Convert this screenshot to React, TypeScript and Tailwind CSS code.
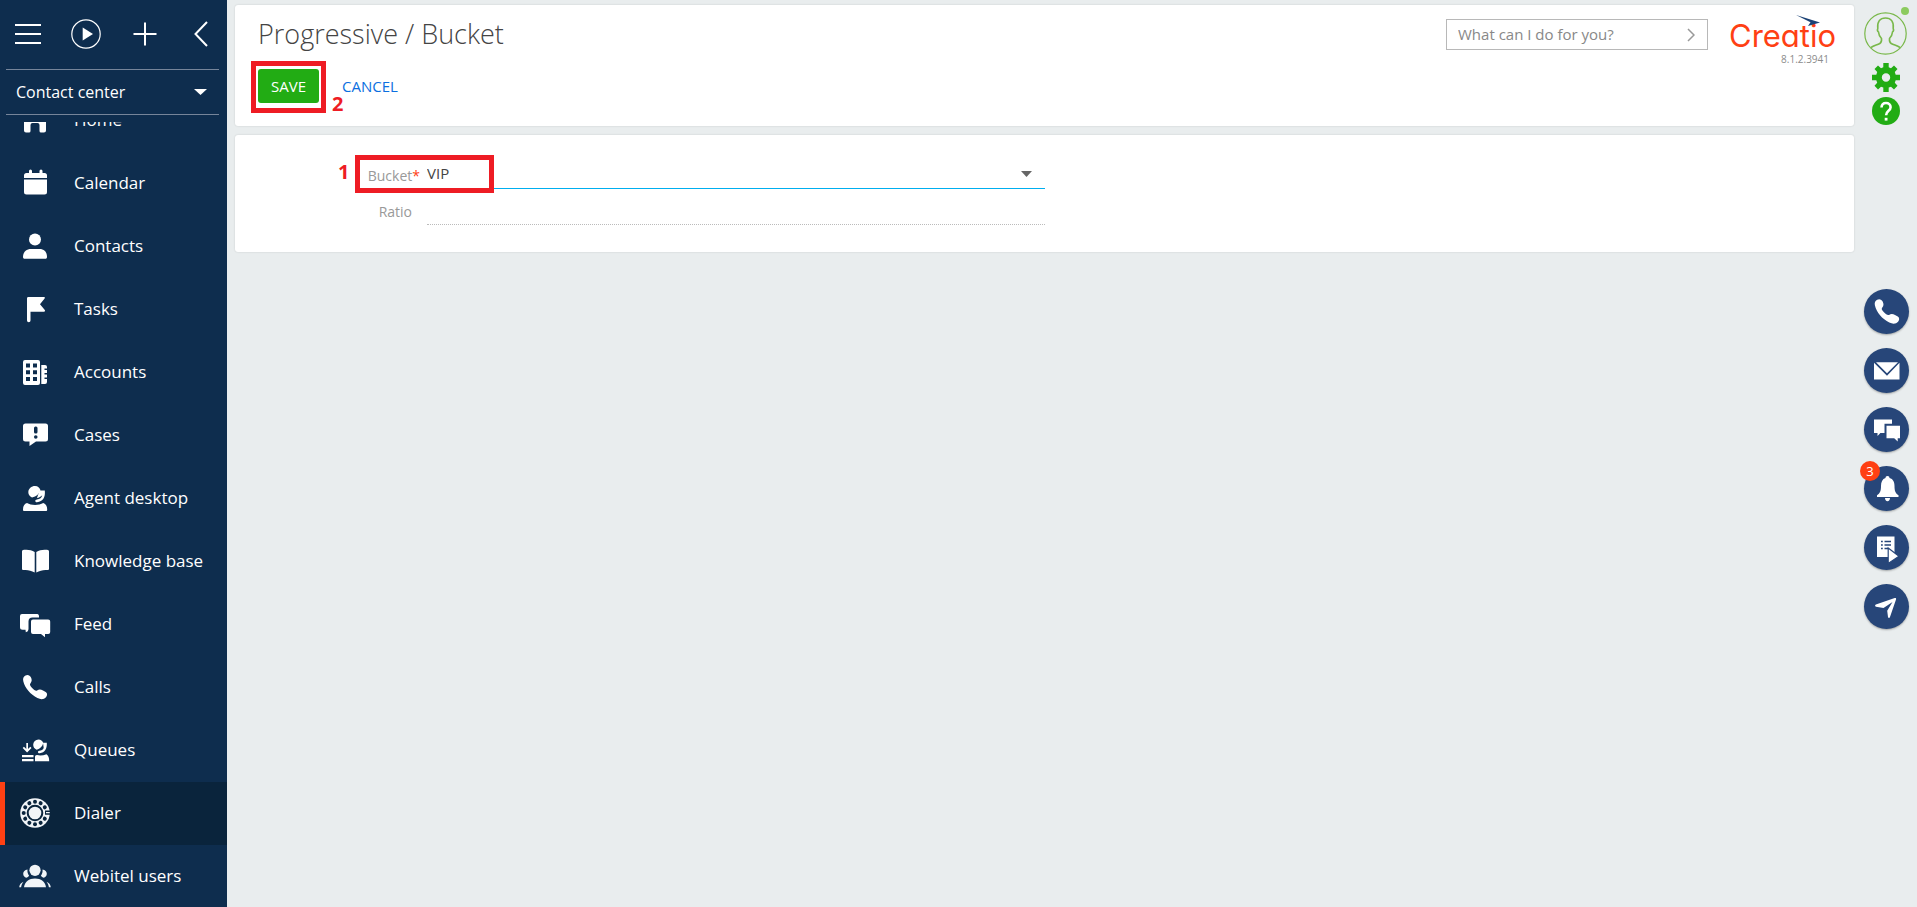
import type { ReactNode } from "react";

const NAVY = "#0e2d4e";

function Glyph({ children }: { children: ReactNode }) {
  return (
    <svg viewBox="0 0 35 35" className="size-[35px] shrink-0 fill-current" aria-hidden="true">
      {children}
    </svg>
  );
}

const HANDSET =
  "M8.5 5.6C10.6 4.4 13 5.3 14 7.6c1 2.3 1 4-.5 5.6-1 1.2-.6 2.2 1.4 4.5 2.2 2.5 4 3.4 5.2 2.8 1.900-1.200 3.600-1.200 5.900 0l2.700 1.500c1.800 1.200 1.800 3.400.3 5.200-2 2.200-5 2.600-8.600.8C13.500 24.600 7.800 18 6.300 11.300c-.6-2.700.1-4.600 2.200-5.700z";

const menu: { label: string; active?: boolean; icon: ReactNode }[] = [
  {
    label: "Home",
    icon: <path d="M18 4 7 13v14.500a2 2 0 0 0 2 2h3a1.500 1.500 0 0 0 1.500-1.500v-6a2 2 0 0 1 2-2h5a2 2 0 0 1 2 2v6a1.500 1.500 0 0 0 1.500 1.500h3a2 2 0 0 0 2-2V13z" />,
  },
  {
    label: "Calendar",
    icon: (
      <path d="M7 12V9.500A2.500 2.500 0 0 1 9.500 7H12V5a1.500 1.500 0 0 1 3 0v2h7.500V5a1.500 1.500 0 0 1 3 0v2h2A2.500 2.500 0 0 1 30 9.500V12zM7 13.500h23V26a2.500 2.500 0 0 1-2.500 2.500h-18A2.500 2.500 0 0 1 7 26z" />
    ),
  },
  {
    label: "Contacts",
    icon: (
      <>
        <circle cx="18" cy="10.500" r="6" />
        <path d="M6 28c0-5 3.500-8 8-8h8.500c4.500 0 7.500 3 7.500 8 0 1.200-.6 1.800-1.800 1.800H7.800C6.600 29.800 6 29.200 6 28z" />
      </>
    ),
  },
  {
    label: "Tasks",
    icon: <path d="M10 6.500C10 5.500 10.500 5 11.500 5h15.300c1 0 1.400.7.8 1.500L23 12.200l4.800 5.800c.6.9.2 1.700-.9 1.700H13.500v8.800a1.750 1.750 0 0 1-3.500 0z" />,
  },
  {
    label: "Accounts",
    icon: (
      <>
        <path fillRule="evenodd" d="M8 5h13a2 2 0 0 1 2 2v21a2 2 0 0 1-2 2H8a2 2 0 0 1-2-2V7a2 2 0 0 1 2-2zm1 3.500v4h4v-4zm7 0v4h4v-4zm-7 6.700v4h4v-4zm7 0v4h4v-4zM9 22v4h4v-4zm7 0v4h4v-4z" />
        <path d="M24.300 10h3.700a2 2 0 0 1 2 2v1.500h-2.500v1.500h2.500v3h-2.500v1.500h2.500v3h-2.500v1.500h2.500V27a2 2 0 0 1-2 2h-3.700z" />
      </>
    ),
  },
  {
    label: "Cases",
    icon: (
      <>
        <path d="M8.500 5.500h20A2.500 2.500 0 0 1 31 8v13a2.500 2.500 0 0 1-2.500 2.500H19L12.500 28v-4.500h-4A2.500 2.500 0 0 1 6 21V8a2.500 2.500 0 0 1 2.500-2.500z" />
        <rect x="17" y="8.500" width="3.500" height="7" rx="1.500" fill={NAVY} />
        <circle cx="18.750" cy="19" r="1.800" fill={NAVY} />
      </>
    ),
  },
  {
    label: "Agent desktop",
    icon: (
      <>
        <path d="M18 5c3 0 4.500 2 5.500 4.200C22 13 19.500 15.500 15 16.500c-2.400-1-3.700-3-3.700-5.400C11.300 7.700 14.500 5 18 5z" />
        <path d="M22.500 9.500h5.300C28.500 16.500 26 20.500 20 21.300c-1 0-1.700-.5-1.700-1.400s.7-1.300 1.700-1.400c3-.5 4.500-1.800 5.300-4.300-1.500 1.500-3.300 2.500-5.300 2.800z" />
        <path d="M10 22c4 2.600 12 2.600 16.300 0 2.700 1.400 3.900 3 3.900 6.500 0 1-.4 1.500-1.400 1.500H7.400c-1 0-1.400-.5-1.400-1.500C6 25 7.500 22.800 10 22z" />
      </>
    ),
  },
  {
    label: "Knowledge base",
    icon: <path d="M5 7.500C5 6.500 5.800 6 7 5.800c4-.5 7.500.2 10.700 2.200v20.500C14 26.300 10.500 25.600 6.500 26c-1 0-1.500-.4-1.500-1.300zM32 7.500c0-1-.8-1.500-2-1.700-4-.5-7.500.2-10.700 2.200v20.500c3.700-2.200 7.200-2.900 11.200-2.500 1 0 1.500-.4 1.500-1.300z" />,
  },
  {
    label: "Feed",
    icon: (
      <path d="M5 7h15.500A2 2 0 0 1 22 9v1.500h-6.500a4 4 0 0 0-4 4v7.300c0 2-1 3.200-2.700 3.400l-.3-2.400H5.500A2.500 2.500 0 0 1 3 20.300V9a2 2 0 0 1 2-2zM16 12.500h15.200a2 2 0 0 1 2 2V25a2 2 0 0 1-2 2H28v3.300L24 27h-8a2 2 0 0 1-2-2V14.500a2 2 0 0 1 2-2z" />
    ),
  },
  { label: "Calls", icon: <path d={HANDSET} /> },
  {
    label: "Queues",
    icon: (
      <>
        <path d="M9.300 10h1.700v6l2.300-2.300 1.200 1.300-4.400 4.400L5.700 15l1.200-1.300L9.300 16zM5 22h11.500v2.200H5zM5 26h11.500v2.200H5z" />
        <path d="M21.500 6.500c2.300 0 4 1.300 4.800 3.500-1 3.500-3 5.800-6.600 6.800-2.400-1-3.500-2.800-3.500-5a5.300 5.300 0 0 1 5.300-5.300z" />
        <path d="M26 9.800h3.800c.4 6-2 9.800-7 10.500-2.200.2-2.600-2.200-.4-2.500 2-.3 3.500-1.200 4.300-2.900z" />
        <path d="M18 24c0-1.200.7-2 2-2 3 .7 6 .5 9.500-.8 2 1.300 2.700 3.500 2.700 7H18z" />
      </>
    ),
  },
  {
    label: "Dialer",
    active: true,
    icon: (
      <>
        <circle cx="18" cy="17" r="14.800" fill="#f1f4f7" />
        <circle cx="18" cy="17" r="7.300" fill="none" stroke="#0a243c" strokeWidth="2" />
        {[30, 60, 90, 120, 150, 180, 210, 240, 270, 300, 330].map((deg) => (
          <circle key={deg} cx="29.300" cy="17" r="2" fill="#0a243c" transform={`rotate(${deg} 18 17)`} />
        ))}
        <path d="M28 14.500h5v1.500h-4v1.300h4v1.500h-5z" fill="#0a243c" />
      </>
    ),
  },
  {
    label: "Webitel users",
    icon: (
      <g fill="#f1f4f7">
        <circle cx="18" cy="11.300" r="5.600" />
        <path d="M7 28.300c.8-5.500 5-8.800 11-8.800s10.200 3.300 11 8.800z" />
        <path d="M10.500 10.500c-2.700.3-4.300 2-4.300 4.200 0 2 1.300 3.600 3.200 4 1.200-.5 2-1.100 2.700-2-1.400-1.800-1.900-3.700-1.600-6.200zM25.500 10.500c2.700.3 4.300 2 4.300 4.200 0 2-1.300 3.600-3.200 4-1.200-.5-2-1.100-2.700-2 1.400-1.800 1.900-3.700 1.600-6.200zM6.500 22.800C4 23.800 2.600 25.500 2.200 28.300h1.900c.3-2.200 1.100-4 2.400-5.500zM29.500 22.800c2.500 1 3.900 2.700 4.300 5.500h-1.900c-.3-2.200-1.100-4-2.400-5.500z" />
      </g>
    ),
  },
];

function Sidebar() {
  return (
    <aside className="flex w-[227px] shrink-0 flex-col overflow-hidden bg-[#0e2d4e] text-white">
      <div className="flex h-[69px] shrink-0 items-center gap-[30px] pr-[19px] pb-0.5 pl-[15px]">
        <button type="button" aria-label="Menu">
          <svg viewBox="0 0 26 26" className="size-[26px] stroke-current stroke-2">
            <path d="M0 4h26M0 13h26M0 22h26" />
          </svg>
        </button>
        <button type="button" aria-label="Run process">
          <svg viewBox="0 0 30 30" className="size-[30px] fill-current">
            <circle cx="15" cy="15" r="14.200" fill="none" stroke="currentColor" strokeWidth="1.200" />
            <path d="M11.700 8.500v13L22 15z" />
          </svg>
        </button>
        <button type="button" aria-label="Add">
          <svg viewBox="0 0 28 28" className="size-7 stroke-current stroke-2">
            <path d="M2.500 14h23M14 2.500v23" />
          </svg>
        </button>
        <button type="button" aria-label="Collapse" className="ml-auto">
          <svg viewBox="0 0 14 26" className="h-[26px] w-3.5 fill-none stroke-current stroke-2">
            <path d="M13 1 1.500 13 13 25" />
          </svg>
        </button>
      </div>
      <button
        type="button"
        className="mr-2 ml-1.5 flex h-[46px] shrink-0 items-center justify-between border-y border-[#76859a] pr-3 pl-2.5 text-[16px]"
      >
        <span>Contact center</span>
        <svg viewBox="0 0 13 6" className="h-1.5 w-[13px] fill-current" aria-hidden="true">
          <path d="M0 0h13L6.500 6z" />
        </svg>
      </button>
      <nav className="mt-[7px] min-h-0 flex-1 overflow-hidden">
        <ul className="-mt-[33px]">
          {menu.map((item) => (
            <li key={item.label}>
              <a
                href="#"
                className={
                  item.active
                    ? "flex h-[63px] items-center gap-[22px] border-l-5 border-[#ff4013] bg-[#0a243c] pl-3 text-[17px]"
                    : "flex h-[63px] items-center gap-[22px] pl-[17px] text-[17px]"
                }
              >
                <Glyph>{item.icon}</Glyph>
                <span className="pb-0.5 whitespace-nowrap">{item.label}</span>
              </a>
            </li>
          ))}
        </ul>
      </nav>
    </aside>
  );
}

function Logo() {
  return (
    <div className="w-[104px]">
      <div className="relative h-[38px] pt-1">
        <span className="block font-['Inter',sans-serif] text-[31px] leading-[34px] font-normal text-[#ff4013] [font-feature-settings:'cv11']">
          Creatio
        </span>
        <svg viewBox="0 0 24 11" className="absolute top-0 left-[67px] h-[11px] w-6" aria-hidden="true">
          <path d="M0 0 24 7.500 12 11l2.500-3.800z" fill="#1b4276" />
        </svg>
      </div>
      <p className="pr-1 text-right text-[10px] leading-3 text-[#8c8c8c]">8.1.2.3941</p>
    </div>
  );
}

function Header() {
  return (
    <header className="flex h-[121px] items-start justify-between rounded-[3px] bg-white pl-[23px] shadow-[0_0_2px_rgba(0,0,0,0.15)]">
      <div>
        <h1 className="pt-[9px] text-[27px] leading-10 font-light text-[#444]">Progressive / Bucket</h1>
        <div className="relative mt-[15px] flex items-center gap-[15px] text-[15px]">
          <button type="button" className="h-[34px] w-[61px] rounded-[3px] bg-[#22ac14] text-white">
            SAVE
          </button>
          <button type="button" className="h-[34px] px-2 text-[#0b6fe0]">
            CANCEL
          </button>
          <div className="pointer-events-none absolute -top-2 -left-[7px] h-[52px] w-[75px] border-5 border-[#ee1c24]" />
          <span className="absolute top-[25px] left-[74px] text-[20px] leading-5 font-bold text-[#ee1c24]">2</span>
        </div>
      </div>
      <div className="flex items-start gap-[21px] pr-[21px]">
        <div className="mt-3.5 flex h-[31px] w-[262px] items-center border border-[#b8b8b8] pr-3 pl-[11px]">
          <input
            type="text"
            aria-label="Command line"
            placeholder="What can I do for you?"
            className="min-w-0 flex-1 text-[15px] outline-none placeholder:text-[#888]"
          />
          <svg viewBox="0 0 8 14" className="h-3.5 w-2 fill-none stroke-[#999] stroke-[1.5]" aria-hidden="true">
            <path d="M1 1l6 6-6 6" />
          </svg>
        </div>
        <div className="mt-2.5">
          <Logo />
        </div>
      </div>
    </header>
  );
}

function Form() {
  return (
    <section className="rounded-[3px] bg-white px-[19px] pt-5 pb-[27px] shadow-[0_0_2px_rgba(0,0,0,0.15)]">
      <form className="flex w-1/2 flex-col gap-[5px]">
        <div className="relative flex items-end gap-[7px]">
          <label htmlFor="bucket" className="w-[166px] pb-[3px] text-right text-[14px] text-[#999]">
            Bucket<span className="text-[#ff4013]">*</span>
          </label>
          <div className="relative flex-1">
            <select
              id="bucket"
              defaultValue="VIP"
              className="h-[34px] w-full appearance-none border-b border-[#00aeef] bg-white pt-1 text-[15px] text-[#444] outline-none"
            >
              <option>VIP</option>
            </select>
            <svg viewBox="0 0 11 6" className="pointer-events-none absolute top-4 right-[13px] h-1.5 w-[11px] fill-[#666]" aria-hidden="true">
              <path d="M0 0h11L5.500 6z" />
            </svg>
          </div>
          <div className="pointer-events-none absolute top-0 left-[101px] h-[38px] w-[139px] border-5 border-[#ee1c24]" />
          <span className="absolute top-[7px] left-[84px] text-[20px] leading-5 font-bold text-[#ee1c24]">1</span>
        </div>
        <div className="flex items-center gap-[15px]">
          <label htmlFor="ratio" className="w-[158px] pt-1 text-right text-[14px] text-[#999]">
            Ratio
          </label>
          <input
            id="ratio"
            type="text"
            className="h-[31px] min-w-0 flex-1 border-b border-dotted border-[#bbb] text-[15px] text-[#444] outline-none"
          />
        </div>
      </form>
    </section>
  );
}

const tools: { label: string; badge?: number; icon: ReactNode }[] = [
  { label: "Calls", icon: <g transform="translate(4.500 5) scale(1.020)"><path d={HANDSET} /></g> },
  {
    label: "Email",
    icon: (
      <path d="M12 14.300h22L23 25.200zM10 14.800l13 13 12.500-13V31.500H10z" />
    ),
  },
  {
    label: "Chats",
    icon: <path d="M10 12.500h18v4.300h-7.500V26h-4.300v.3L13.500 29v-3H10zM22.500 18.800H36v12.400h-2.300v3.300l-3.500-3.300h-7.700z" />,
  },
  {
    label: "Notifications",
    badge: 3,
    icon: (
      <path d="M23.500 10c1.400 0 2 .8 2 2 3.700 1 5 4 5 8 0 5 1 7.500 4 9.200V31H13v-1.800c3-1.700 4-4.200 4-9.200 0-4 1.300-7 4.500-8 0-1.200.6-2 2-2zM21 32h5c0 2-1 3.200-2.500 3.200S21 34 21 32z" />
    ),
  },
  {
    label: "Processes",
    icon: (
      <>
        <path d="M13 11.500h17.500V32H13z" />
        <path d="M17 16.500h1.800M20.500 16.500H27M17 20h1.800M20.500 20H27M17 23.500h1.800M20.500 23.500H24" stroke="#274679" strokeWidth="1.300" />
        <path d="M24.200 23 35 31.300 24.200 38.500z" stroke="#274679" strokeWidth="1.200" />
      </>
    ),
  },
  {
    label: "Send",
    icon: <path d="M30.700 14c1-.3 1.600.2 1.400 1.200L26 33c-.4 1.300-1.600 1.300-2 .1l-.8-6.300 5.300-8.700-9 6-7.500-1.400c-1.200-.4-1.200-1.600-.1-2.100z" />,
  },
];

function RightPanel() {
  return (
    <aside className="flex w-[63px] shrink-0 flex-col items-center text-[#22ac14]">
      <button type="button" aria-label="Profile" className="relative mt-3">
        <svg viewBox="0 0 43 43" className="size-[43px] fill-none stroke-[#79b84a]">
          <circle cx="21.500" cy="21.500" r="20.700" strokeWidth="1.200" />
          <path d="M7 35.500c3-2 6.200-2.500 8.800-4 1.500-1 2-2.500 1.700-5-2-2-2.800-4-3-6.500-1-.8-1.300-2.200-.7-3.500C13 9.500 16 6 21.500 6s8.500 3.500 7.700 10.500c.6 1.300.3 2.700-.7 3.500-.2 2.500-1 4.500-3 6.500-.3 2.500.2 4 1.700 5 2.600 1.500 5.800 2 8.800 4" strokeWidth="1.600" />
        </svg>
        <span className="absolute -top-[5px] -right-[2px] size-2 rounded-full bg-[#8ccb5e]" />
      </button>
      <button type="button" aria-label="Settings" className="mt-2">
        <svg viewBox="0 0 28 29" className="h-[29px] w-7 fill-current">
          <path fillRule="evenodd" d="M11.300 0h5.400v4.300l2.300.9 3-2.700 3.500 3.500-2.700 3 .9 2.700H28v5.600h-4.300l-.9 2.500 2.700 3-3.500 3.600-3-2.700-2.300.9V29h-5.400v-4.400L9 23.700l-3 2.700-3.500-3.600 2.700-3-.9-2.500H0v-5.600h4.300L5.200 9l-2.700-3L6 2.500l3 2.700 2.300-.9zM14 10.300a4.200 4.200 0 1 0 0 8.400 4.200 4.200 0 0 0 0-8.400z" />
        </svg>
      </button>
      <button type="button" aria-label="Help" className="mt-[5px]">
        <svg viewBox="0 0 28 28" className="size-7 fill-current">
          <circle cx="14" cy="14" r="14" />
          <path d="M9.500 10.500c.2-2.800 1.900-4.500 4.500-4.500s4.600 1.600 4.600 4.200c0 3.600-4.500 3.600-4.500 8" fill="none" stroke="white" strokeWidth="2.600" />
          <path d="M12.700 20.800h2.800v2.800h-2.800z" fill="white" />
        </svg>
      </button>
      <div className="mt-[164px] flex flex-col gap-3.5 pl-0.5">
        {tools.map((tool) => (
          <button
            key={tool.label}
            type="button"
            aria-label={tool.label}
            className="relative size-[45px] rounded-full bg-[#274679] text-white shadow-[0_1px_2px_rgba(0,0,0,0.3)]"
          >
            <svg viewBox="0 0 45 45" className="size-[45px] fill-current" aria-hidden="true">
              {tool.icon}
            </svg>
            {tool.badge && (
              <span className="absolute -top-[5px] -left-1 flex size-5 items-center justify-center rounded-full bg-[#ff4013] text-[13px] leading-none">
                {tool.badge}
              </span>
            )}
          </button>
        ))}
      </div>
    </aside>
  );
}

export default function App() {
  return (
    <div className="flex h-screen bg-[#e9edee] font-['Open_Sans',sans-serif]">
      <Sidebar />
      <main className="flex min-w-0 flex-1 flex-col gap-[9px] pt-[5px] pl-2">
        <Header />
        <Form />
      </main>
      <RightPanel />
    </div>
  );
}
